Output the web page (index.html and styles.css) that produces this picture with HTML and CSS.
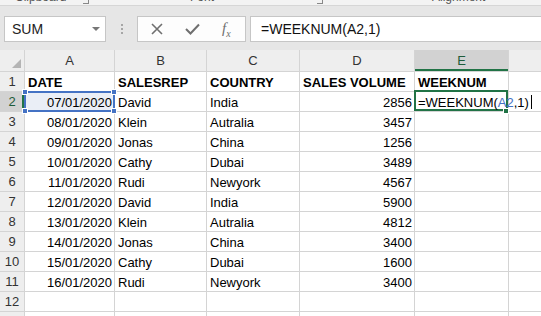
FILE: index.html
```html
<!DOCTYPE html>
<html lang="en">
<head>
  <meta charset="UTF-8">
  <title>WEEKNUM</title>
  <link rel="stylesheet" href="styles.css">
</head>
<body>
  <div class="ribbon">
    <span class="group-label clip">Clipboard</span>
    <span class="launcher l1"></span>
    <span class="group-label font">Font</span>
    <span class="launcher l2"></span>
    <span class="group-label align">Alignment</span>
  </div>

  <div class="formula-bar">
    <div class="name-box">
      <span>SUM</span>
      <span class="caret"></span>
    </div>
    <div class="grip"><i></i><i></i><i></i></div>
    <div class="fx-buttons">
      <svg width="12" height="12" viewBox="0 0 12 12"><path d="M1 1 L11 11 M11 1 L1 11" stroke="#6f6f6f" stroke-width="1.6" fill="none"/></svg>
      <svg width="15" height="12" viewBox="0 0 15 12"><path d="M1 6 L5.5 10.5 L14 1.5" stroke="#6f6f6f" stroke-width="2" fill="none"/></svg>
      <span class="fx">f<sub>x</sub></span>
    </div>
    <div class="formula-input">=WEEKNUM(A2,1)</div>
  </div>

  <div class="sheet">
    <div class="corner"><span class="tri"></span></div>
    <div class="col-head">A</div>
    <div class="col-head">B</div>
    <div class="col-head">C</div>
    <div class="col-head">D</div>
    <div class="col-head active">E</div>
    <div class="col-head edge">H</div>

    <div class="row-head">1</div>
    <div class="cell bold">DATE</div>
    <div class="cell bold">SALESREP</div>
    <div class="cell bold">COUNTRY</div>
    <div class="cell bold">SALES VOLUME</div>
    <div class="cell bold">WEEKNUM</div>
    <div class="cell"></div>

    <div class="row-head active">2</div>
    <div class="cell num ref">07/01/2020<i class="h tl"></i><i class="h tr"></i><i class="h bl"></i><i class="h br"></i></div>
    <div class="cell">David</div>
    <div class="cell">India</div>
    <div class="cell num">2856</div>
    <div class="cell editing">=WEEKNUM(<span class="ref-text">A2</span>,1)<span class="cursor"></span><i class="fill"></i></div>
    <div class="cell"></div>

    <div class="row-head">3</div>
    <div class="cell num">08/01/2020</div>
    <div class="cell">Klein</div>
    <div class="cell">Autralia</div>
    <div class="cell num">3457</div>
    <div class="cell"></div>
    <div class="cell"></div>

    <div class="row-head">4</div>
    <div class="cell num">09/01/2020</div>
    <div class="cell">Jonas</div>
    <div class="cell">China</div>
    <div class="cell num">1256</div>
    <div class="cell"></div>
    <div class="cell"></div>

    <div class="row-head">5</div>
    <div class="cell num">10/01/2020</div>
    <div class="cell">Cathy</div>
    <div class="cell">Dubai</div>
    <div class="cell num">3489</div>
    <div class="cell"></div>
    <div class="cell"></div>

    <div class="row-head">6</div>
    <div class="cell num">11/01/2020</div>
    <div class="cell">Rudi</div>
    <div class="cell">Newyork</div>
    <div class="cell num">4567</div>
    <div class="cell"></div>
    <div class="cell"></div>

    <div class="row-head">7</div>
    <div class="cell num">12/01/2020</div>
    <div class="cell">David</div>
    <div class="cell">India</div>
    <div class="cell num">5900</div>
    <div class="cell"></div>
    <div class="cell"></div>

    <div class="row-head">8</div>
    <div class="cell num">13/01/2020</div>
    <div class="cell">Klein</div>
    <div class="cell">Autralia</div>
    <div class="cell num">4812</div>
    <div class="cell"></div>
    <div class="cell"></div>

    <div class="row-head">9</div>
    <div class="cell num">14/01/2020</div>
    <div class="cell">Jonas</div>
    <div class="cell">China</div>
    <div class="cell num">3400</div>
    <div class="cell"></div>
    <div class="cell"></div>

    <div class="row-head">10</div>
    <div class="cell num">15/01/2020</div>
    <div class="cell">Cathy</div>
    <div class="cell">Dubai</div>
    <div class="cell num">1600</div>
    <div class="cell"></div>
    <div class="cell"></div>

    <div class="row-head">11</div>
    <div class="cell num">16/01/2020</div>
    <div class="cell">Rudi</div>
    <div class="cell">Newyork</div>
    <div class="cell num">3400</div>
    <div class="cell"></div>
    <div class="cell"></div>

    <div class="row-head">12</div>
    <div class="cell"></div>
    <div class="cell"></div>
    <div class="cell"></div>
    <div class="cell"></div>
    <div class="cell"></div>
    <div class="cell"></div>

    <div class="row-head">13</div>
    <div class="cell"></div>
    <div class="cell"></div>
    <div class="cell"></div>
    <div class="cell"></div>
    <div class="cell"></div>
    <div class="cell"></div>
  </div>
</body>
</html>
```

FILE: styles.css
```css
body {
  margin: 0;
  width: 541px;
  height: 316px;
  overflow: hidden;
  background-color: #e6e6e6;
  font-family: 'Liberation Sans', Arial, sans-serif;
  color: #000;
}

/* ribbon group labels, only their bottoms are visible */
.ribbon {
  position: relative;
  height: 5px;
  background-color: #f3f3f3;
  border-bottom: 1px solid #d6d6d6;
  overflow: hidden;
}

.group-label {
  position: absolute;
  top: -9px;
  font-size: 12px;
  line-height: 12px;
  color: #555;
}

.clip { left: 15px; }
.font { left: 190px; }
.align { left: 432px; }

.launcher {
  position: absolute;
  top: 0;
  width: 5px;
  height: 3px;
  border-right: 1px solid #888;
  border-bottom: 1px solid #888;
}

.l1 { left: 83px; }
.l2 { left: 317px; }

.formula-bar {
  display: flex;
  align-items: center;
  padding: 10px 0 8px 4px;
}

.name-box {
  display: flex;
  align-items: center;
  justify-content: space-between;
  box-sizing: border-box;
  width: 102px;
  height: 26px;
  padding: 0 5px 0 7px;
  background-color: #fff;
  border: 1px solid #c6c6c6;
  font-size: 14px;
  color: #222;
}

.caret {
  width: 0;
  height: 0;
  border-left: 4px solid transparent;
  border-right: 4px solid transparent;
  border-top: 4px solid #777;
}

.grip {
  display: flex;
  flex-direction: column;
  gap: 2px;
  margin: 0 14px 0 15px;
}

.grip i {
  width: 2px;
  height: 2px;
  background-color: #a6a6a6;
}

.fx-buttons {
  display: flex;
  align-items: center;
  box-sizing: border-box;
  width: 109px;
  height: 26px;
  padding: 0 12px 0 13px;
  gap: 22px;
  background-color: #fdfdfd;
  border: 1px solid #c6c6c6;
}

.fx {
  font-family: 'Liberation Serif', serif;
  font-style: italic;
  font-size: 15px;
  color: #6f6f6f;
}

.fx sub {
  font-size: 10px;
}

.formula-input {
  flex: 1;
  box-sizing: border-box;
  height: 26px;
  margin-left: 4px;
  padding: 4px 0 0 10px;
  background-color: #fff;
  border: 1px solid #c6c6c6;
  border-right: none;
  font-size: 14px;
  color: #111;
}

.sheet {
  display: grid;
  grid-template-columns: 24px 89px 91px 92px 114px 93px 1fr;
  grid-template-rows: 21px repeat(13, 19px);
  gap: 1px;
  background-color: #d4d4d4;
  font-size: 13px;
}

.corner {
  position: relative;
  background-color: #eeeeee;
}

.tri {
  position: absolute;
  right: 3px;
  bottom: 3px;
  width: 0;
  height: 0;
  border-left: 9px solid transparent;
  border-bottom: 9px solid #b4b4b4;
}

.col-head {
  background-color: #eeeeee;
  text-align: center;
  line-height: 22px;
  color: #333;
}

.col-head.active {
  background-color: #d2d2d2;
  color: #1e5c3a;
  box-shadow: inset 0 -2px 0 #217346;
}

.col-head.edge {
  text-indent: 56px;
  color: #800000;
  overflow: hidden;
}

.row-head {
  background-color: #eeeeee;
  text-align: center;
  line-height: 20px;
  color: #333;
}

.row-head.active {
  background-color: #d2d2d2;
  color: #1e5c3a;
  box-shadow: inset -2px 0 0 #217346;
}

.cell {
  position: relative;
  background-color: #fff;
  padding: 2px 3px 0;
  line-height: 17px;
  white-space: nowrap;
}

.bold {
  font-weight: bold;
}

.num {
  text-align: right;
  padding-right: 2px;
}

.ref {
  background-color: #eaeef6;
}

.ref::after {
  content: "";
  position: absolute;
  top: -1px;
  left: -1px;
  right: -1px;
  bottom: -1px;
  border: 2px solid #4472c4;
  box-sizing: border-box;
}

.h {
  position: absolute;
  z-index: 1;
  width: 4px;
  height: 4px;
  background-color: #4472c4;
  border: 1px solid #fff;
}

.tl { top: -3px; left: -3px; }
.tr { top: -3px; right: -3px; }
.bl { bottom: -3px; left: -3px; }
.br { bottom: -3px; right: -3px; }

.editing {
  z-index: 2;
  overflow: visible;
}

.editing::before {
  content: "";
  position: absolute;
  z-index: -1;
  top: -2px;
  left: -1px;
  right: 0;
  bottom: 0;
  border: 2px solid #217346;
}

.ref-text {
  color: #4472c4;
}

.cursor {
  display: inline-block;
  width: 1px;
  height: 14px;
  margin-left: 2px;
  vertical-align: -2px;
  background-color: #000;
}

.fill {
  position: absolute;
  z-index: 1;
  right: -1px;
  bottom: -3px;
  width: 4px;
  height: 4px;
  background-color: #217346;
  border: 1px solid #fff;
}
```
